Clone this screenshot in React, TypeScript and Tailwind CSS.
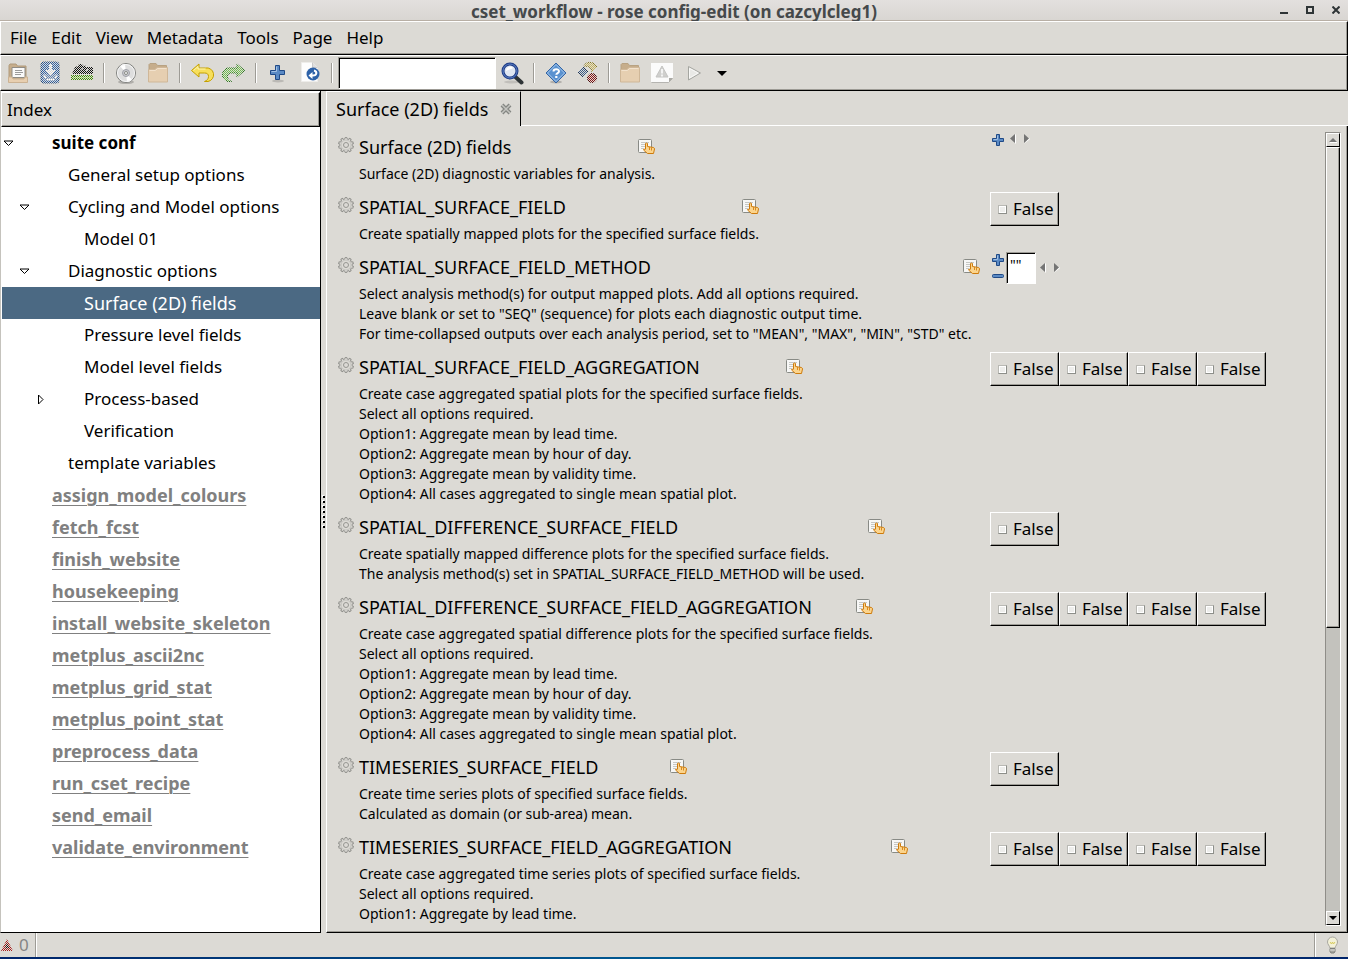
import type { ReactNode } from "react";

interface ITreeItem {
    label: string;
    level: number;
    arrow?: "open" | "closed";
    kind?: "root" | "ignored" | "selected";
}

interface ISetting {
    title: string;
    help: string[];
    widget: "list" | "textList" | "bools";
    count?: number;
    minWidth?: string;
}

const MENUS = ["File", "Edit", "View", "Metadata", "Tools", "Page", "Help"];

const TREE: ITreeItem[] = [
    { label: "suite conf", level: 0, arrow: "open", kind: "root" },
    { label: "General setup options", level: 1 },
    { label: "Cycling and Model options", level: 1, arrow: "open" },
    { label: "Model 01", level: 2 },
    { label: "Diagnostic options", level: 1, arrow: "open" },
    { label: "Surface (2D) fields", level: 2, kind: "selected" },
    { label: "Pressure level fields", level: 2 },
    { label: "Model level fields", level: 2 },
    { label: "Process-based", level: 2, arrow: "closed" },
    { label: "Verification", level: 2 },
    { label: "template variables", level: 1 },
    { label: "assign_model_colours", level: 0, kind: "ignored" },
    { label: "fetch_fcst", level: 0, kind: "ignored" },
    { label: "finish_website", level: 0, kind: "ignored" },
    { label: "housekeeping", level: 0, kind: "ignored" },
    { label: "install_website_skeleton", level: 0, kind: "ignored" },
    { label: "metplus_ascii2nc", level: 0, kind: "ignored" },
    { label: "metplus_grid_stat", level: 0, kind: "ignored" },
    { label: "metplus_point_stat", level: 0, kind: "ignored" },
    { label: "preprocess_data", level: 0, kind: "ignored" },
    { label: "run_cset_recipe", level: 0, kind: "ignored" },
    { label: "send_email", level: 0, kind: "ignored" },
    { label: "validate_environment", level: 0, kind: "ignored" },
];

const SETTINGS: ISetting[] = [
    {
        title: "Surface (2D) fields",
        help: ["Surface (2D) diagnostic variables for analysis."],
        widget: "list",
    },
    {
        title: "SPATIAL_SURFACE_FIELD",
        help: ["Create spatially mapped plots for the specified surface fields."],
        widget: "bools",
        count: 1,
    },
    {
        title: "SPATIAL_SURFACE_FIELD_METHOD",
        help: [
            "Select analysis method(s) for output mapped plots. Add all options required.",
            'Leave blank or set to "SEQ" (sequence) for plots each diagnostic output time.',
            'For time-collapsed outputs over each analysis period, set to "MEAN", "MAX", "MIN", "STD" etc.',
        ],
        widget: "textList",
        minWidth: "min-w-[621px]",
    },
    {
        title: "SPATIAL_SURFACE_FIELD_AGGREGATION",
        help: [
            "Create case aggregated spatial plots for the specified surface fields.",
            "Select all options required.",
            "Option1: Aggregate mean by lead time.",
            "Option2: Aggregate mean by hour of day.",
            "Option3: Aggregate mean by validity time.",
            "Option4: All cases aggregated to single mean spatial plot.",
        ],
        widget: "bools",
        count: 4,
    },
    {
        title: "SPATIAL_DIFFERENCE_SURFACE_FIELD",
        help: [
            "Create spatially mapped difference plots for the specified surface fields.",
            "The analysis method(s) set in SPATIAL_SURFACE_FIELD_METHOD will be used.",
        ],
        widget: "bools",
        count: 1,
        minWidth: "min-w-[526px]",
    },
    {
        title: "SPATIAL_DIFFERENCE_SURFACE_FIELD_AGGREGATION",
        help: [
            "Create case aggregated spatial difference plots for the specified surface fields.",
            "Select all options required.",
            "Option1: Aggregate mean by lead time.",
            "Option2: Aggregate mean by hour of day.",
            "Option3: Aggregate mean by validity time.",
            "Option4: All cases aggregated to single mean spatial plot.",
        ],
        widget: "bools",
        count: 4,
    },
    {
        title: "TIMESERIES_SURFACE_FIELD",
        help: [
            "Create time series plots of specified surface fields.",
            "Calculated as domain (or sub-area) mean.",
        ],
        widget: "bools",
        count: 1,
    },
    {
        title: "TIMESERIES_SURFACE_FIELD_AGGREGATION",
        help: [
            "Create case aggregated time series plots of specified surface fields.",
            "Select all options required.",
            "Option1: Aggregate by lead time.",
        ],
        widget: "bools",
        count: 4,
        minWidth: "min-w-[549px]",
    },
];

/* ---------- icons ---------- */

// checkerboard laid over an icon whose button is insensitive
function Dither({ id }: { id: string }) {
    return (
        <>
            <defs>
                <pattern id={id} width="2" height="2" patternUnits="userSpaceOnUse">
                    <path d="M0 0h1v1H0zM1 1h1v1H1z" fill="#dcdad5" shapeRendering="crispEdges" />
                </pattern>
            </defs>
            <rect width="24" height="24" fill={`url(#${id})`} />
        </>
    );
}

function Icon({ children }: { children: ReactNode }) {
    return (
        <svg width="24" height="24" viewBox="0 0 24 24" fill="none" aria-hidden="true">
            {children}
        </svg>
    );
}

function OpenIcon() {
    return (
        <Icon>
            <path d="M3 21V4.5L4 3h6l1.500 2H20v16z" fill="#c6ad8b" stroke="#b09a7a" />
            <path d="M6 6.500h13v10H6z" fill="#fafafa" stroke="#8f8c86" />
            <path d="M9 9.500h7M9 11.500h8M9 13.500h6" stroke="#9b9b9b" />
            <path d="M2.500 16H6l1 2h11l1-2h2.500v5.500h-19z" fill="#e8cfb0" stroke="#cbb293" />
        </Icon>
    );
}

function SaveIcon() {
    return (
        <Icon>
            <rect x="3" y="1" width="18" height="21" rx="2.500" fill="#2f62a8" stroke="#1d4377" />
            <rect x="5" y="13" width="14" height="7" rx="2" fill="#5c80b4" />
            <path d="M11 3h3v6h4l-5.500 5.500L7 9h4z" fill="#f2f4f6" />
            <path d="M6 14l2 3M19 14l-2 3M9 18.500h7" stroke="#fff" strokeWidth="1.500" />
            <Dither id="dither-save" />
        </Icon>
    );
}

function CheckAllIcon() {
    return (
        <Icon>
            <path d="M2 13l3-7 3-1 1-2h3l1 2 2-1 1 2h7v7z" fill="#111" />
            <path d="M6 9l2-2M11 10l2-3M16 10l2-2" stroke="#bbb" />
            <path d="M1 14h22v5H1z" fill="#3f8a06" />
            <path d="M3 16.500h18" stroke="#8ad04a" />
            <Dither id="dither-check" />
        </Icon>
    );
}

function DiscIcon() {
    return (
        <Icon>
            <ellipse cx="12" cy="21" rx="8" ry="2" fill="#000" opacity=".2" />
            <circle cx="12" cy="12" r="9.500" fill="#dedede" stroke="#80817e" />
            <path d="M12 12L6 5a9 9 0 0 1 5-2zM12 12l6 7a9 9 0 0 1-5 2z" fill="#fff" />
            <circle cx="12" cy="12" r="8.500" stroke="#f6f6f6" />
            <circle cx="12" cy="12" r="3.500" fill="#c9cacf" stroke="#a0a1a8" />
            <circle cx="12" cy="12" r="1.500" fill="#f8f8f8" stroke="#888a85" />
        </Icon>
    );
}

function FolderIcon() {
    return (
        <Icon>
            <path d="M3 9V3.500L4 2.500h6l1.500 2H20.500V9z" fill="#c6ad8b" stroke="#b8a282" />
            <path d="M2.500 8.500H9l2-2h10.500v14.500h-19z" fill="#e6cfb1" stroke="#cfb798" />
            <path d="M3.500 9.500H9.500l2-2h9" stroke="#f2e2cd" />
        </Icon>
    );
}

function UndoIcon() {
    return (
        <Icon>
            <path
                d="M1.500 9.500L9 3v4h6.500a6.500 6.500 0 0 1 2.500 13.500h-3.500c2.500-1 4-2.500 4-5 0-2.500-1.500-3.500-4-3.500H9V16z"
                fill="#f7df5b"
                stroke="#c4a000"
                strokeLinejoin="round"
            />
            <path d="M3.500 9.500L8 5.500V8h7.500" stroke="#fdf5b5" />
        </Icon>
    );
}

function RedoIcon() {
    return (
        <Icon>
            <path
                d="M22.500 9.500L15 3v4H8.500A6.500 6.500 0 0 0 6 20.500h3.500c-2.500-1-4-2.500-4-5 0-2.500 1.500-3.500 4-3.500H15V16z"
                fill="#6fc04c"
                stroke="#1f6a12"
                strokeLinejoin="round"
            />
            <Dither id="dither-redo" />
        </Icon>
    );
}

function AddIcon() {
    return (
        <Icon>
            <ellipse cx="12" cy="20" rx="6" ry="1.500" fill="#000" opacity=".15" />
            <path
                d="M9.500 4.500h4V9.500h5v4h-5v5h-4v-5h-5v-4h5z"
                fill="#5b8ac4"
                stroke="#204a87"
                strokeLinejoin="round"
            />
            <path d="M10.500 5.500v5H5.500" stroke="#a3c1e4" />
        </Icon>
    );
}

function RevertIcon() {
    return (
        <Icon>
            <path d="M3.500 1.500h11l5 5v14h-16z" fill="#fdfdfd" stroke="#eeedea" />
            <path d="M14.500 1.500v5h5" fill="#dedede" stroke="#c8c8c8" />
            <circle cx="15" cy="13" r="6.500" fill="#2e62a8" />
            <path d="M16 9.500c3.500 1 3 5-1 5h-1" stroke="#fff" strokeWidth="2" />
            <path d="M14.500 11v7l-4-3.500z" fill="#fff" />
        </Icon>
    );
}

function FindIcon() {
    return (
        <Icon>
            <ellipse cx="12" cy="21" rx="8" ry="1.500" fill="#000" opacity=".12" />
            <path d="M15.500 16l6 5.500" stroke="#2e3436" strokeWidth="4" strokeLinecap="round" />
            <circle cx="10" cy="10" r="7" fill="#dfe6f2" stroke="#1f3c86" strokeWidth="3" />
            <circle cx="10" cy="10" r="7" stroke="#5b7fc4" />
            <path d="M6 10a4 4 0 0 1 7-3c-2 2-4 1-7 3z" fill="#fff" />
        </Icon>
    );
}

function HelpIcon() {
    return (
        <Icon>
            <ellipse cx="12" cy="21" rx="6" ry="1.500" fill="#000" opacity=".2" />
            <path d="M12 2L22 12 12 22 2 12z" fill="#5a92d0" stroke="#3465a4" strokeLinejoin="round" />
            <path d="M12 3.500L20.500 12 12 20.500 3.500 12z" stroke="#a9c9ec" />
            <path d="M9.500 10.500c0-3 5.500-3 5.500-.2 0 1.800-2.700 1.700-2.700 3.400" stroke="#fff" strokeWidth="2" />
            <path d="M11.200 15h2.200v2h-2.200z" fill="#fff" />
        </Icon>
    );
}

function NodesIcon() {
    return (
        <Icon>
            <path d="M7 6l5 5-5 5-5-5z" fill="#3c5c88" stroke="#1d3558" />
            <path d="M8 5c2-5 10-5 13 1l-5 5c0-4-3-6-8-6z" fill="#c9b55a" stroke="#7d6c10" />
            <circle cx="16" cy="17" r="4.500" fill="#8a1414" stroke="#4a0606" />
            <Dither id="dither-nodes" />
        </Icon>
    );
}

function WarnPageIcon() {
    return (
        <Icon>
            <path d="M1 2h22v15l-4 4H1z" fill="#fbfbfb" />
            <path d="M1.500 21.500h17l4-4" stroke="#b5b4b0" />
            <path d="M23 17h-4v4z" fill="#aaa9a4" />
            <path d="M12 5l6 11H6z" fill="#cfcfcd" stroke="#c4c4c2" strokeLinejoin="round" />
            <path d="M12 8v4.500M12 13.500v2" stroke="#fff" strokeWidth="1.500" />
        </Icon>
    );
}

function RunIcon() {
    return (
        <Icon>
            <path d="M6.500 5.500l12 6.500-12 7z" fill="#e9e9e6" stroke="#a5a6a1" strokeLinejoin="round" />
            <path d="M7.500 7.500l8.500 4.500-8.500 5z" stroke="#f8f8f6" />
        </Icon>
    );
}

function GearIcon() {
    const teeth = [0, 36, 72, 108, 144, 180, 216, 252, 288, 324];
    return (
        <svg width="16" height="16" viewBox="0 0 16 16" fill="none" aria-hidden="true">
            {teeth.map((a) => (
                <path
                    key={a}
                    d="M6.500 2.500L7.200.5h1.600l.7 2"
                    fill="#dcdad5"
                    stroke="#8f8f8b"
                    transform={`rotate(${a} 8 8)`}
                />
            ))}
            <circle cx="8" cy="8" r="5" stroke="#c4c3bf" fill="#dcdad5" />
            <circle cx="8" cy="8" r="2.500" stroke="#969692" />
        </svg>
    );
}

function HandIcon() {
    return (
        <svg width="17" height="17" viewBox="0 0 17 17" fill="none" aria-hidden="true">
            <rect x=".5" y="1.500" width="13" height="13" rx="1" fill="#f7f7f6" stroke="#888a85" />
            <path d="M3 4.500h8M3 6.500h4M3 8.500h4M3 10.500h3" stroke="#c6c7c4" />
            <path
                d="M7.500 11V5.500q1-1 2 0v3l6 1q1 .5 1 1.500l-1 4.500h-6L5.500 12q0-1.500 2-.5"
                fill="#fbd48d"
                stroke="#ce7b0c"
                strokeLinejoin="round"
            />
            <path d="M11.500 9v3M13.500 9.500v3" stroke="#d98a1c" />
        </svg>
    );
}

function PlusSmall() {
    return (
        <svg width="12" height="12" viewBox="0 0 12 12" fill="none" aria-hidden="true">
            <path d="M4.500.5h3v4h4v3h-4v4h-3v-4h-4v-3h4z" fill="#5b8ac4" stroke="#204a87" strokeLinejoin="round" />
            <path d="M5.500 1.500v4H1.500" stroke="#9dbde3" />
        </svg>
    );
}

function MinusSmall() {
    return (
        <svg width="12" height="4" viewBox="0 0 12 4" fill="none" aria-hidden="true">
            <rect x=".5" y=".5" width="11" height="3" rx="1" fill="#5b8ac4" stroke="#204a87" />
        </svg>
    );
}

function BulbIcon() {
    return (
        <svg width="13" height="18" viewBox="0 0 13 18" fill="none" aria-hidden="true">
            <path
                d="M6.500 1a5 5 0 0 0-5 5c0 2.500 2 3.500 2.500 6h5c.5-2.500 2.500-3.500 2.500-6a5 5 0 0 0-5-5z"
                fill="#f3f1d8"
                stroke="#a9a8a0"
            />
            <path d="M4 6l1.500 2 1-2 1 2L9 6" stroke="#d8cc5c" />
            <path d="M4 12.500h5v3l-1 1.500H5l-1-1.500z" fill="#a4a49e" stroke="#7f807b" />
            <path d="M4 14h5" stroke="#e4e4e0" />
        </svg>
    );
}

function TreeArrow({ type }: { type: "open" | "closed" }) {
    return (
        <svg width="11" height="11" viewBox="0 0 11 11" fill="none" aria-hidden="true">
            {type === "open" ? (
                <path d="M0 3h9L4.500 7.500z" stroke="#000" />
            ) : (
                <path d="M2.500 1v9L7 5.500z" stroke="#000" />
            )}
        </svg>
    );
}

/* ---------- small parts ---------- */

function ToolButton({ label, children }: { label: string; children: ReactNode }) {
    return (
        <button type="button" aria-label={label} className="flex h-8 w-8 items-center justify-center">
            {children}
        </button>
    );
}

function Separator({ narrow }: { narrow?: boolean }) {
    return (
        <div className={narrow ? "flex w-2.5 justify-center" : "flex w-3 justify-center"}>
            <div className="h-5 w-0.5 border-l border-r border-l-[#9d9b95] border-r-white" />
        </div>
    );
}

function ListArrows() {
    return (
        <div className="flex gap-2">
            <button type="button" aria-label="Move left">
                <svg width="7" height="10" viewBox="0 0 7 10" aria-hidden="true">
                    <path d="M6 1v9L7 9V0z" fill="#fff" />
                    <path d="M6 0v9L1 4.500z" fill="#757575" />
                </svg>
            </button>
            <button type="button" aria-label="Move right">
                <svg width="7" height="10" viewBox="0 0 7 10" aria-hidden="true">
                    <path d="M0 10l6-5-1-1z" fill="#fff" />
                    <path d="M0 0v9l5-4.500z" fill="#757575" />
                </svg>
            </button>
        </div>
    );
}

function BoolButton({ name }: { name: string }) {
    return (
        <label className="flex h-[34px] w-[69px] items-center border border-t-white border-r-black border-b-black border-l-white pl-[7px] shadow-[inset_-1px_-1px_0_#9d9b95]">
            <input
                type="checkbox"
                name={name}
                className="h-[9px] w-[9px] appearance-none border border-t-[#b9b9b4] border-r-[#8d8f8a] border-b-[#8d8f8a] border-l-[#b9b9b4] bg-[#eeeeec] shadow-[inset_0_0_0_1px_#fff]"
            />
            <span className="ml-1.5">False</span>
        </label>
    );
}

function Widget({ setting }: { setting: ISetting }) {
    if (setting.widget === "list") {
        return (
            <div className="flex items-start gap-[5px] pt-0.5 pl-0.5">
                <button type="button" aria-label="Add item">
                    <PlusSmall />
                </button>
                <ListArrows />
            </div>
        );
    }
    if (setting.widget === "textList") {
        return (
            <div className="flex items-center pl-0.5">
                <div className="flex flex-col gap-2 pr-0.5 pb-1">
                    <button type="button" aria-label="Add item" className="h-3">
                        <PlusSmall />
                    </button>
                    <button type="button" aria-label="Remove item" className="h-1">
                        <MinusSmall />
                    </button>
                </div>
                <input
                    type="text"
                    aria-label={setting.title}
                    defaultValue={'""'}
                    className="mr-[3px] h-8 w-[30px] border border-t-[#9d9b95] border-r-white border-b-white border-l-[#9d9b95] bg-white px-[3px] pb-2 text-[14px] shadow-[inset_1px_1px_0_#000] outline-none"
                />
                <ListArrows />
            </div>
        );
    }
    return (
        <div className="flex">
            {Array.from({ length: setting.count ?? 1 }, (_, i) => (
                <BoolButton key={i} name={`${setting.title}-${i + 1}`} />
            ))}
        </div>
    );
}

function SettingRow({ setting }: { setting: ISetting }) {
    return (
        <li className="flex pb-2">
            <div className="flex w-[652px] shrink-0 items-start">
                <button type="button" aria-label="Options" className="mt-[5px] w-[21px] shrink-0">
                    <GearIcon />
                </button>
                <div className={`w-fit whitespace-nowrap ${setting.minWidth ?? ""}`}>
                    <div className="flex h-8 items-start justify-between">
                        <h2 className="text-[18px] leading-[30px]">{setting.title}</h2>
                        <button type="button" aria-label="Edit comments" className="mt-1.5">
                            <HandIcon />
                        </button>
                    </div>
                    {setting.help.map((line) => (
                        <p key={line} className="text-[14px] leading-5">
                            {line}
                        </p>
                    ))}
                </div>
            </div>
            <div className="h-8">
                <Widget setting={setting} />
            </div>
        </li>
    );
}

function TreeRow({ item }: { item: ITreeItem }) {
    const indents = ["pl-0.5", "pl-[18px]", "pl-[34px]"];
    const look =
        item.kind === "root"
            ? "font-bold"
            : item.kind === "ignored"
              ? "text-[18px] font-bold text-[#808080] underline underline-offset-3 decoration-1"
              : item.kind === "selected"
                ? "text-[18px] text-white"
                : "";
    return (
        <li
            className={`flex h-8 items-center ${indents[item.level]} ${item.kind === "selected" ? "bg-[#4b6983]" : ""}`}
        >
            <span className="flex w-12 shrink-0">{item.arrow && <TreeArrow type={item.arrow} />}</span>
            <span className={look}>{item.label}</span>
        </li>
    );
}

/* ---------- window ---------- */

function TitleBar() {
    return (
        <header className="flex h-[21px] shrink-0 items-center border-b border-[#b8afa5] bg-linear-to-b from-[#e3e0de] to-[#d9d6d2]">
            <div className="w-20" />
            <h1 className="flex-1 pt-[3px] text-center leading-5 font-bold whitespace-nowrap text-[#45494b]">
                cset_workflow - rose config-edit (on cazcylcleg1)
            </h1>
            <div className="flex w-20 items-center justify-end gap-[18px] pr-2">
                <button type="button" aria-label="Minimize" className="flex h-2 w-2 items-end">
                    <span className="h-0.5 w-2 bg-[#2e3436]" />
                </button>
                <button type="button" aria-label="Maximize" className="h-2 w-2 border-2 border-[#2e3436]" />
                <button type="button" aria-label="Close">
                    <svg width="8" height="8" viewBox="0 0 8 8" aria-hidden="true">
                        <path d="M.5.5l7 7M7.500.5l-7 7" stroke="#2e3436" strokeWidth="2" />
                    </svg>
                </button>
            </div>
        </header>
    );
}

function Toolbar() {
    return (
        <div className="flex h-9 shrink-0 items-center border border-t-white border-r-black border-b-black border-l-white pl-px shadow-[inset_-1px_-1px_0_#9d9b95]">
            <ToolButton label="Open"><OpenIcon /></ToolButton>
            <ToolButton label="Save"><SaveIcon /></ToolButton>
            <ToolButton label="Check and save"><CheckAllIcon /></ToolButton>
            <Separator />
            <ToolButton label="Load all"><DiscIcon /></ToolButton>
            <ToolButton label="Browse files"><FolderIcon /></ToolButton>
            <Separator />
            <ToolButton label="Undo"><UndoIcon /></ToolButton>
            <ToolButton label="Redo"><RedoIcon /></ToolButton>
            <Separator />
            <ToolButton label="Add"><AddIcon /></ToolButton>
            <ToolButton label="Revert page"><RevertIcon /></ToolButton>
            <Separator />
            <input
                type="text"
                aria-label="Find expression"
                className="h-8 w-[158px] border border-t-[#9d9b95] border-r-white border-b-white border-l-[#9d9b95] bg-white px-1 shadow-[inset_1px_1px_0_#000] outline-none"
            />
            <ToolButton label="Find"><FindIcon /></ToolButton>
            <Separator />
            <ToolButton label="Validate"><HelpIcon /></ToolButton>
            <ToolButton label="Transform"><NodesIcon /></ToolButton>
            <Separator narrow />
            <ToolButton label="View output"><FolderIcon /></ToolButton>
            <ToolButton label="View warnings"><WarnPageIcon /></ToolButton>
            <ToolButton label="Run suite"><RunIcon /></ToolButton>
            <button type="button" aria-label="Run options" className="flex w-6 justify-center">
                <svg width="10" height="5" viewBox="0 0 10 5" aria-hidden="true">
                    <path d="M0 0h10L5 5z" fill="#000" />
                </svg>
            </button>
        </div>
    );
}

function IndexPanel() {
    return (
        <nav aria-label="Index" className="flex w-[321px] shrink-0 flex-col border-r border-b border-l border-r-black border-b-black border-l-[#c5c3bd] bg-white">
            <div className="mt-px flex h-[35px] shrink-0 items-center border border-t-white border-r-black border-b-black border-l-white bg-[#dcdad5] pl-[5px] shadow-[inset_-1px_-1px_0_#9d9b95]">
                Index
            </div>
            <ul className="ml-px min-h-0 flex-1 overflow-hidden whitespace-nowrap">
                {TREE.map((item) => (
                    <TreeRow key={item.label} item={item} />
                ))}
            </ul>
        </nav>
    );
}

function PaneGrip() {
    return (
        <div className="flex w-[5px] shrink-0 flex-col items-center justify-center gap-[3px]">
            {[0, 1, 2, 3, 4, 5, 6].map((dot) => (
                <span key={dot} className="h-0.5 w-0.5 bg-black shadow-[-1px_-1px_0_#fff]" />
            ))}
        </div>
    );
}

function ScrollBar() {
    return (
        <div className="flex w-4 shrink-0 flex-col border border-t-[#8f8d88] border-r-white border-b-white border-l-[#8f8d88] bg-[#c3c2bd]">
            <button type="button" aria-label="Scroll up" className="flex h-3.5 shrink-0 items-center justify-center border border-t-white border-r-black border-b-black border-l-white bg-[#dcdad5]">
                <svg width="8" height="5" viewBox="0 0 8 5" aria-hidden="true">
                    <path d="M4 0l4 4H0z" fill="#757575" />
                    <path d="M1 4.500h7" stroke="#fff" />
                </svg>
            </button>
            <div className="min-h-0 flex-1">
                <div className="h-[63%] border border-t-white border-r-black border-b-black border-l-white bg-[#dcdad5] shadow-[inset_-1px_-1px_0_#9d9b95]" />
            </div>
            <button type="button" aria-label="Scroll down" className="flex h-3.5 shrink-0 items-center justify-center border border-t-white border-r-black border-b-black border-l-white bg-[#dcdad5]">
                <svg width="8" height="4" viewBox="0 0 8 4" aria-hidden="true">
                    <path d="M0 0h8L4 4z" fill="#000" />
                </svg>
            </button>
        </div>
    );
}

function SettingsPanel() {
    return (
        <main className="flex min-w-0 flex-1 flex-col">
            <div className="flex h-[35px] shrink-0">
                <div className="flex items-center gap-3 border-t border-r border-l border-t-white border-r-black border-l-white pr-2 pl-[9px]">
                    <span className="text-[18px] whitespace-nowrap">Surface (2D) fields</span>
                    <button type="button" aria-label="Close tab">
                        <svg width="12" height="12" viewBox="0 0 12 12" fill="none" aria-hidden="true">
                            <path d="M2 2l8 8M10 2l-8 8" stroke="#858783" strokeWidth="4" />
                            <path d="M2 2l8 8M10 2l-8 8" stroke="#c4c4c0" strokeWidth="1.500" />
                        </svg>
                    </button>
                </div>
                <div className="flex-1 border-b border-white" />
            </div>
            <div className="flex min-h-0 flex-1 border-r border-b border-l border-r-black border-b-black border-l-white pt-1.5 pr-1.5 pb-1.5 shadow-[inset_-1px_-1px_0_#9d9b95]">
                <ul className="min-w-0 flex-1 overflow-hidden pl-[11px]">
                    {SETTINGS.map((setting) => (
                        <SettingRow key={setting.title} setting={setting} />
                    ))}
                </ul>
                <ScrollBar />
            </div>
        </main>
    );
}

function StatusBar() {
    return (
        <footer className="flex h-6 shrink-0 items-stretch">
            <div className="flex w-9 items-center gap-1.5 border-r border-[#9d9b95] pl-px text-[#858585]">
                <svg width="12" height="12" viewBox="0 0 12 12" aria-hidden="true">
                    <path d="M6 0l6 12H0z" fill="#a61c1c" />
                    <path d="M6 4l2 5H4z" fill="#111" />
                    <Dither id="dither-errors" />
                </svg>
                <span>0</span>
            </div>
            <div className="flex-1 border-l border-white" />
            <div className="flex w-[34px] items-center justify-center border-l border-[#9d9b95] pl-px shadow-[inset_1px_0_0_#fff]">
                <BulbIcon />
            </div>
        </footer>
    );
}

function App() {
    return (
        <div className="flex h-screen flex-col overflow-hidden bg-[#dcdad5] font-['Noto_Sans','Open_Sans',sans-serif] text-[17px] leading-6 text-black">
            <TitleBar />
            <nav aria-label="Menu" className="flex h-[34px] shrink-0 items-center gap-3.5 border border-t-white border-r-black border-b-black border-l-white pl-[9px] shadow-[inset_-1px_-1px_0_#9d9b95]">
                {MENUS.map((menu) => (
                    <button key={menu} type="button">
                        {menu}
                    </button>
                ))}
            </nav>
            <Toolbar />
            <div className="flex min-h-0 flex-1">
                <IndexPanel />
                <PaneGrip />
                <SettingsPanel />
            </div>
            <StatusBar />
            <div className="h-0.5 shrink-0 bg-linear-to-r from-[#00246a] via-[#005b93] to-[#00246a]" />
        </div>
    );
}

export default App;
